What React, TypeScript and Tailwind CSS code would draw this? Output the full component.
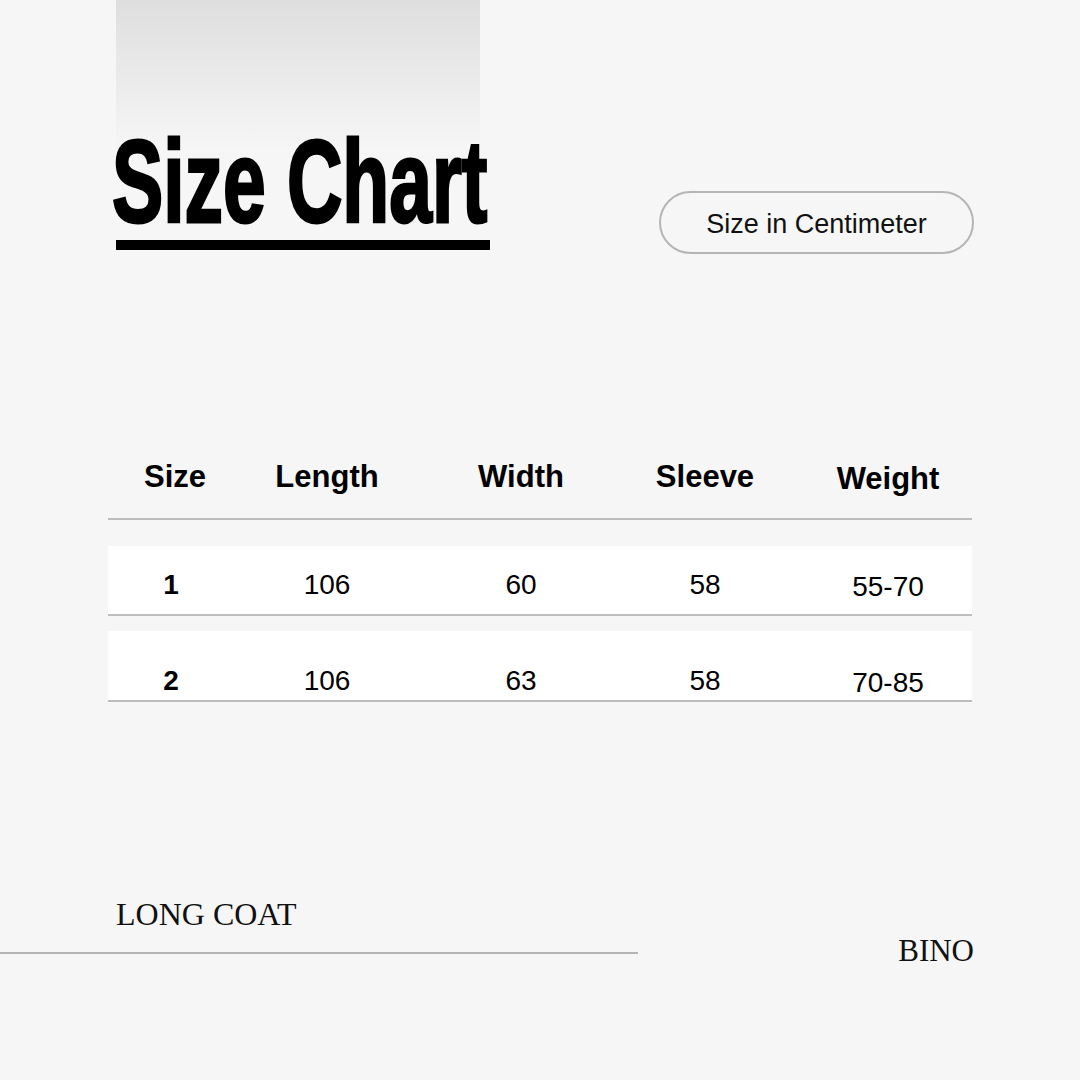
export default function App() {
  const rows = [
    { size: '1', length: '106', width: '60', sleeve: '58', weight: '55-70' },
    { size: '2', length: '106', width: '63', sleeve: '58', weight: '70-85' },
  ];

  return (
    <div className="relative w-[1080px] h-[1080px] overflow-hidden bg-[#f6f6f6] font-['Liberation_Sans',Arial,sans-serif] text-black">
      {/* soft grey block behind the title */}
      <div className="absolute left-[116px] top-0 w-[364px] h-[150px] bg-gradient-to-b from-[#dedede] to-[#f6f6f6]" />

      {/* title + unit pill */}
      <div className="relative flex items-start justify-between pt-[123px] pl-[112px] pr-[106px]">
        <div className="w-[380px]">
          <h1 className="whitespace-nowrap origin-left scale-x-[0.656] text-[117px] leading-none font-bold [-webkit-text-stroke:3px_black]">
            Size Chart
          </h1>
          <div className="ml-[4px] w-[374px] h-[10px] bg-black" />
        </div>
        <div className="mt-[68px] flex items-center justify-center pt-[4px] w-[315px] h-[63px] rounded-full border-2 border-[#b5b5b5] text-[27px] text-[#111]">
          Size in Centimeter
        </div>
      </div>

      {/* table */}
      <div className="mt-[205px] ml-[108px] w-[864px]">
        <div className="grid grid-cols-[134px_170px_218px_150px_192px] text-[31px] leading-[36px] font-bold pb-[21px] border-b-2 border-[#bdbdbd]">
          <div className="text-center">Size</div>
          <div className="text-center">Length</div>
          <div className="text-center">Width</div>
          <div className="text-center">Sleeve</div>
          <div className="text-center pl-[24px] mt-[2px]">Weight</div>
        </div>

        {rows.map((r, i) => (
          <div
            key={r.size}
            className={
              i === 0
                ? 'mt-[26px] h-[70px] pt-[22px] grid grid-cols-[134px_170px_218px_150px_192px] bg-white border-b-2 border-[#bdbdbd] text-[28px] leading-[34px]'
                : 'mt-[15px] h-[71px] pt-[33px] grid grid-cols-[134px_170px_218px_150px_192px] bg-white border-b-2 border-[#bdbdbd] text-[28px] leading-[34px]'
            }
          >
            <div className="text-center font-bold pr-[8px]">{r.size}</div>
            <div className="text-center">{r.length}</div>
            <div className="text-center">{r.width}</div>
            <div className="text-center">{r.sleeve}</div>
            <div className="text-center pl-[24px] mt-[2px]">{r.weight}</div>
          </div>
        ))}
      </div>

      {/* footer */}
      <div className="mt-[194px] flex items-start justify-between pr-[106px] font-['Liberation_Serif','Times_New_Roman',serif] leading-[36px] text-[#111]">
        <div className="w-[638px]">
          <div className="pl-[116px] text-[32px]">LONG COAT</div>
          <div className="mt-[20px] h-[2px] bg-[#b5b5b5]" />
        </div>
        <div className="mt-[37px] text-[31px]">BINO</div>
      </div>
    </div>
  );
}
